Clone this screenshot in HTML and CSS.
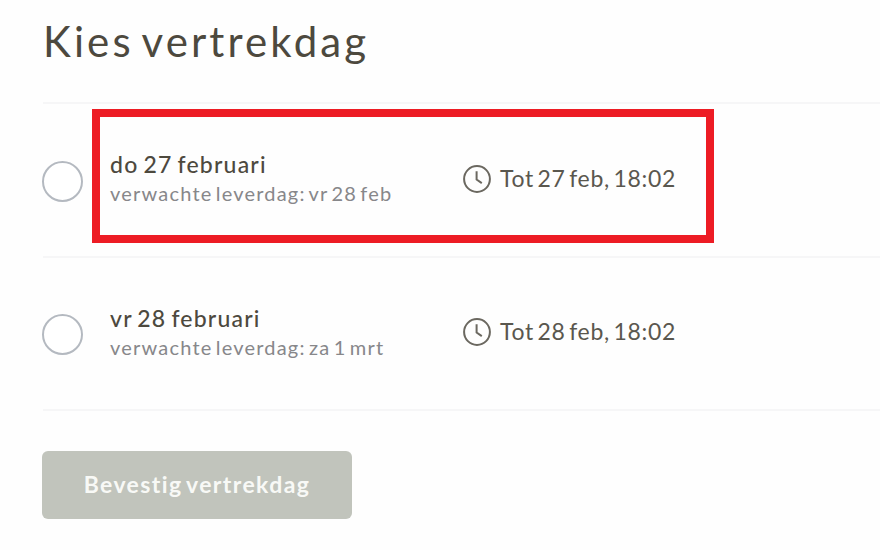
FILE: index.html
```html
<!DOCTYPE html>
<html lang="nl">
<head>
  <meta charset="UTF-8" />
  <meta name="viewport" content="width=device-width, initial-scale=1.0"/>
  <title>Kies vertrekdag</title>
  <link rel="stylesheet" href="styles.css">
</head>
<body>
  <div class="container">
    <h1>Kies vertrekdag</h1>

    <div class="options">
      <label class="option option-first">
        <input type="radio" name="day">
        <span class="day">
          <span class="date">do 27 februari</span>
          <span class="delivery">verwachte leverdag: vr 28 feb</span>
        </span>
        <span class="deadline">
          <svg class="clock" viewBox="0 0 28 28">
            <circle cx="14" cy="14" r="12.9"/>
            <path d="M13.6 6.3v8.2l5.2 3.6"/>
          </svg>
          <span class="time">Tot 27 feb, 18:02</span>
        </span>
        <span class="highlight"></span>
      </label>

      <label class="option">
        <input type="radio" name="day">
        <span class="day">
          <span class="date">vr 28 februari</span>
          <span class="delivery">verwachte leverdag: za 1 mrt</span>
        </span>
        <span class="deadline">
          <svg class="clock" viewBox="0 0 28 28">
            <circle cx="14" cy="14" r="12.9"/>
            <path d="M13.6 6.3v8.2l5.2 3.6"/>
          </svg>
          <span class="time">Tot 28 feb, 18:02</span>
        </span>
      </label>
    </div>

    <button class="confirm" disabled>Bevestig vertrekdag</button>
  </div>
</body>
</html>
```

FILE: styles.css
```css
* {
  box-sizing: border-box;
}

body {
  margin: 0;
  background: #fefefe;
  color: #4d493e;
  font-family: Lato, "Open Sans", sans-serif;
  overflow: hidden;
}

.container {
  padding: 13px 0 0 43px;
}

h1 {
  margin: 0 0 33px;
  height: 56px;
  line-height: 56px;
  font-size: 42px;
  font-weight: 400;
  letter-spacing: 3.1px;
  word-spacing: -5px;
  white-space: nowrap;
}

.options {
  border-top: 2px solid #f6f6f7;
}

.option {
  position: relative;
  display: flex;
  align-items: center;
  height: 153px;
  border-bottom: 2px solid #f6f6f7;
}

.option-first {
  height: 154px;
}

.option input {
  appearance: none;
  flex: none;
  width: 41px;
  height: 41px;
  margin: 2px 27px 0 -1px;
  border: 2px solid #b4b9c0;
  border-radius: 50%;
  background: #fff;
}

.day {
  width: 353px;
  padding-bottom: 4px;
  white-space: nowrap;
}

.date, .delivery {
  display: block;
}

.date {
  line-height: 30px;
  font-size: 23px;
  font-weight: 500;
  letter-spacing: 1.2px;
  word-spacing: -2px;
}

.delivery {
  line-height: 28px;
  font-size: 20px;
  letter-spacing: 1.2px;
  word-spacing: -3px;
  color: #87878a;
}

.deadline {
  display: flex;
  align-items: center;
  gap: 9px;
  padding-bottom: 3px;
  white-space: nowrap;
}

.clock {
  width: 28px;
  height: 28px;
  fill: none;
  stroke: #6b6860;
  stroke-width: 2;
}

.time {
  margin-top: -2px;
  font-size: 23px;
  letter-spacing: 0.7px;
  word-spacing: -3px;
  color: #5a574e;
}

/* red frame over the first option */
.highlight {
  position: absolute;
  left: 49px;
  top: 5px;
  width: 622px;
  height: 134px;
  border: 8px solid #ed1c24;
}

.confirm {
  display: block;
  width: 310px;
  height: 68px;
  margin: 40px 0 0 -1px;
  padding: 0 0 3px;
  border: none;
  border-radius: 6px;
  background: #c1c4bc;
  color: #f8f9f6;
  font-family: inherit;
  font-size: 23px;
  font-weight: 700;
  letter-spacing: 1.4px;
  word-spacing: -3px;
}
```
